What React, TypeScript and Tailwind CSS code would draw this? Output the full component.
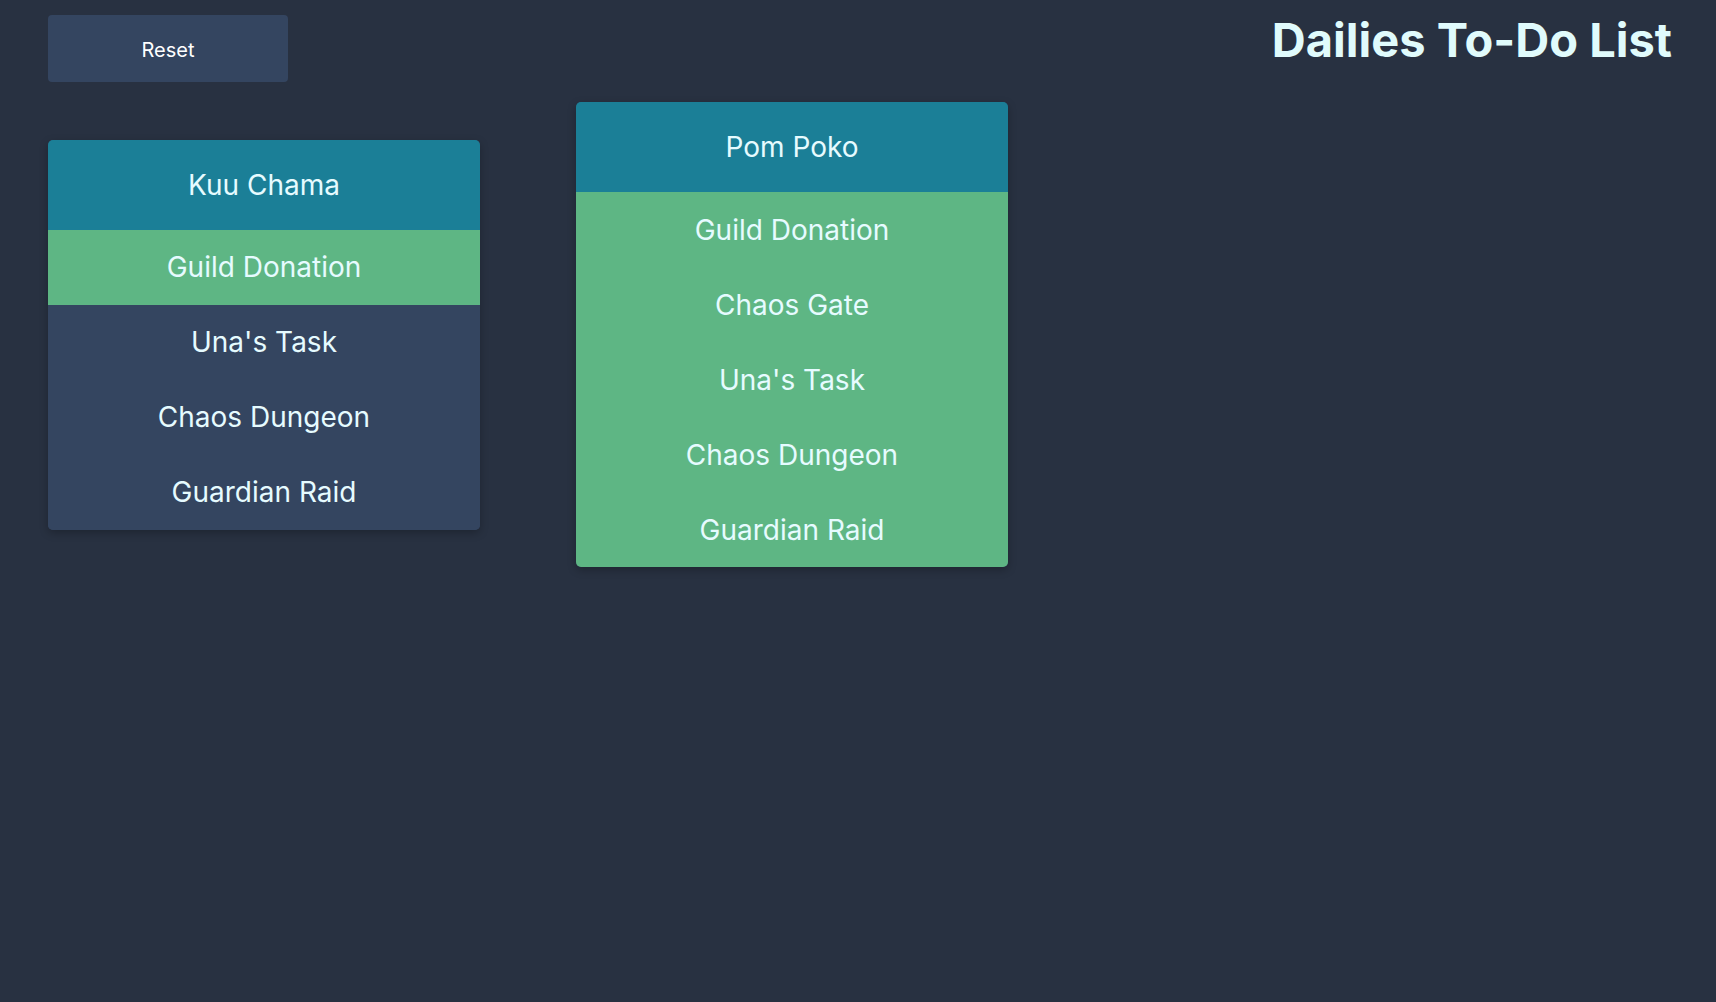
import React from "react";

type Task = { name: string; done: boolean };
type Character = { name: string; tasks: Task[] };

const characters: Character[] = [
  {
    name: "Kuu Chama",
    tasks: [
      { name: "Guild Donation", done: true },
      { name: "Una's Task", done: false },
      { name: "Chaos Dungeon", done: false },
      { name: "Guardian Raid", done: false },
    ],
  },
  {
    name: "Pom Poko",
    tasks: [
      { name: "Guild Donation", done: true },
      { name: "Chaos Gate", done: true },
      { name: "Una's Task", done: true },
      { name: "Chaos Dungeon", done: true },
      { name: "Guardian Raid", done: true },
    ],
  },
];

function CharacterCard({ c }: { c: Character }) {
  return (
    <div className="w-[432px] overflow-hidden rounded-[5px] bg-[#344560] shadow-[0_3px_8px_rgba(0,0,0,0.25)]">
      <div className="flex h-[90px] items-center justify-center bg-[#1b7f97] text-[28px] text-[#e6fbff]">
        {c.name}
      </div>
      {c.tasks.map((t) => (
        <div
          key={t.name}
          className={[
            "flex h-[75px] items-center justify-center text-[28px] text-[#e6fbff]",
            t.done ? "bg-[#5eb684]" : "bg-[#344560]",
          ].join(" ")}
        >
          {t.name}
        </div>
      ))}
    </div>
  );
}

export default function App() {
  return (
    <div
      className="min-h-screen bg-[#283141] pl-12 pr-[44px] pt-[15px]"
      style={{ fontFamily: "Inter, 'Noto Sans', sans-serif" }}
    >
      {/* top bar */}
      <div className="flex items-start justify-between">
        <button className="h-[67px] w-[240px] rounded-[4px] bg-[#344560] pt-[3px] text-[20px] text-white">
          Reset
        </button>
        <h1 className="-mt-[5px] text-[47px] font-bold leading-[60px] text-[#e0fbfc]">
          Dailies To-Do List
        </h1>
      </div>

      {/* characters */}
      <div className="mt-5 flex items-center gap-24">
        {characters.map((c) => (
          <CharacterCard key={c.name} c={c} />
        ))}
      </div>
    </div>
  );
}
